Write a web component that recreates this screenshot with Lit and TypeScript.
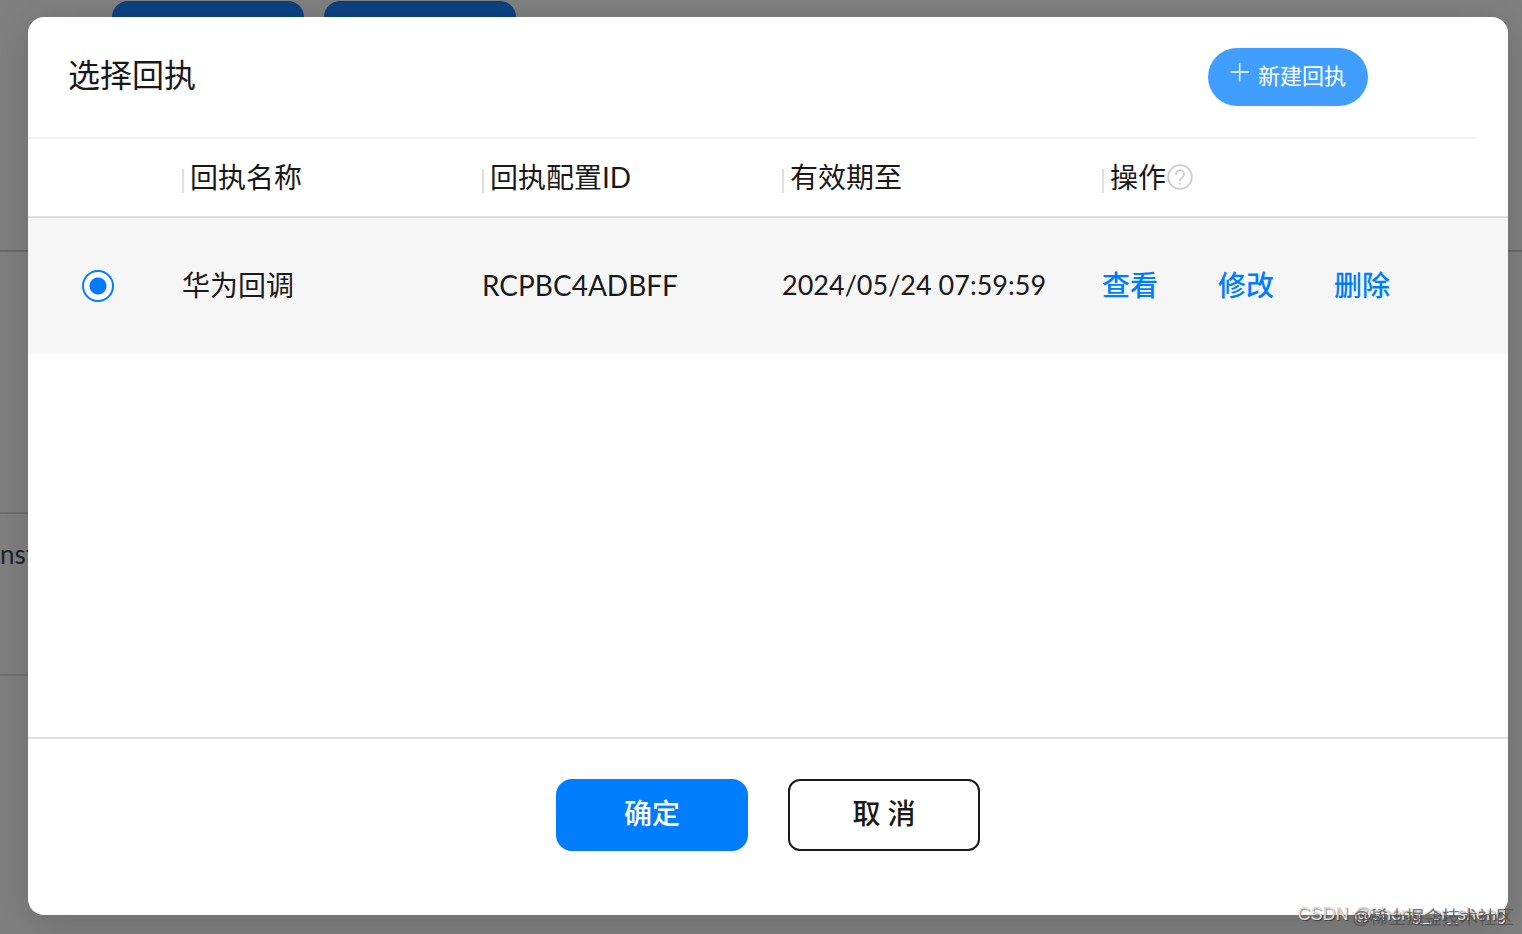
import { LitElement, html, css } from "lit";
import { customElement, state } from "lit/decorators.js";

interface Receipt {
  id: string;
  name: string;
  expires: string;
}

const RECEIPTS: Receipt[] = [
  { id: "RCPBC4ADBFF", name: "华为回调", expires: "2024/05/24 07:59:59" },
];

@customElement("receipt-table")
export class ReceiptTable extends LitElement {
  @state() private selected = "RCPBC4ADBFF";

  static styles = css`
    :host {
      display: block;
      flex: 1;
    }
    table {
      width: 100%;
      border-collapse: separate;
      border-spacing: 0;
      table-layout: fixed;
    }
    .col-pick {
      width: 154px;
    }
    .col-text {
      width: 300px;
    }
    .col-date {
      width: 320px;
    }
    th,
    td {
      padding: 0;
      text-align: left;
      font-weight: 400;
      white-space: nowrap;
      color: #191919;
    }
    th {
      height: 77px;
      border-bottom: 2px solid #dfdfdf;
    }
    .head {
      display: flex;
      align-items: center;
      padding-bottom: 2px;
    }
    .tick {
      width: 2px;
      height: 24px;
      margin: 8px 6px 0 0;
      background: #dfdfdf;
    }
    .head svg {
      display: block;
    }
    .row td {
      box-sizing: border-box;
      height: 136px;
      padding-bottom: 2px;
      background: #f6f6f6;
    }
    .row .pick {
      padding: 0 0 0 54px;
    }
    .row .date {
      font-size: 27px;
    }
    .radio {
      appearance: none;
      display: block;
      box-sizing: border-box;
      width: 32px;
      height: 32px;
      margin: 0;
      border: 2px solid #007dff;
      border-radius: 50%;
      background: #fff;
    }
    .radio:checked {
      background: radial-gradient(circle closest-side, #007dff 8px, #fff 9px);
    }
    .actions {
      display: flex;
      gap: 60px;
    }
    .actions a {
      color: #007dff;
      font-weight: 500;
      text-decoration: none;
    }
  `;

  private heading(text: string, help = false) {
    return html`<div class="head">
      <span class="tick"></span><span>${text}</span>${help
        ? html`<svg width="28" height="28" viewBox="0 0 28 28" fill="none" stroke="#ccc" stroke-width="1.8" role="img" aria-label="帮助">
            <circle cx="14" cy="14" r="11.800"></circle>
            <path d="M10 11.2a4 4 0 1 1 6.300 3.200c-1.500 1-2.300 1.700-2.300 3.400" stroke-linecap="round"></path>
            <circle cx="14" cy="20.800" r="1.100" fill="#ccc" stroke="none"></circle>
          </svg>`
        : null}
    </div>`;
  }

  render() {
    return html`<table>
      <colgroup>
        <col class="col-pick" />
        <col class="col-text" />
        <col class="col-text" />
        <col class="col-date" />
        <col />
      </colgroup>
      <thead>
        <tr>
          <th></th>
          <th>${this.heading("回执名称")}</th>
          <th>${this.heading("回执配置ID")}</th>
          <th>${this.heading("有效期至")}</th>
          <th>${this.heading("操作", true)}</th>
        </tr>
      </thead>
      <tbody>
        ${RECEIPTS.map(
          (r) => html`<tr class="row">
            <td class="pick">
              <input
                class="radio"
                type="radio"
                name="receipt"
                aria-label=${r.name}
                .checked=${this.selected === r.id}
                @change=${() => (this.selected = r.id)}
              />
            </td>
            <td>${r.name}</td>
            <td>${r.id}</td>
            <td class="date">${r.expires}</td>
            <td>
              <div class="actions">
                <a href="#view">查看</a><a href="#edit">修改</a><a href="#delete">删除</a>
              </div>
            </td>
          </tr>`
        )}
      </tbody>
    </table>`;
  }
}

@customElement("app-root")
export class AppRoot extends LitElement {
  static styles = css`
    :host {
      display: grid;
      min-height: 100vh;
      position: relative;
      overflow: hidden;
      background: #808080;
      color: #191919;
      font: 28px/40px Lato, "Noto Sans CJK SC", sans-serif;
    }
    .backdrop,
    .dialog {
      grid-area: 1 / 1;
    }
    .backdrop {
      display: flex;
      flex-direction: column;
    }
    .tabs {
      display: flex;
      gap: 20px;
      height: 249px;
      padding: 1px 112px 0;
      border-bottom: 2px solid #696969;
    }
    .tab {
      width: 192px;
      height: 72px;
      border-radius: 16px;
      background: #0c4182;
    }
    .band {
      width: 50%;
      height: 260px;
      border-bottom: 2px solid #707070;
    }
    .cell {
      box-sizing: border-box;
      width: 50%;
      height: 162px;
      padding-top: 20px;
      border-bottom: 2px solid #707070;
      color: #1c2329;
      font-size: 26px;
    }
    .dialog {
      display: flex;
      flex-direction: column;
      margin: 17px 14px 19px 28px;
      border-radius: 16px;
      background: #fff;
      box-shadow: 0 8px 40px rgba(0, 0, 0, 0.16);
    }
    .top {
      display: flex;
      align-items: center;
      justify-content: space-between;
      height: 120px;
      margin-right: 32px;
      padding: 0 108px 0 40px;
      border-bottom: 2px solid #f2f2f2;
    }
    h1 {
      margin: 0;
      padding-bottom: 4px;
      font-size: 32px;
      font-weight: 400;
    }
    button {
      font-family: inherit;
      cursor: pointer;
    }
    .create {
      display: flex;
      align-items: center;
      gap: 8px;
      height: 58px;
      padding: 0 22px 6px 20px;
      border: 0;
      border-radius: 29px;
      background: #409eff;
      color: #fff;
      font-size: 22px;
    }
    .create svg {
      display: block;
      margin-bottom: 4px;
    }
    .bottom {
      display: flex;
      justify-content: center;
      gap: 40px;
      padding: 40px 0 64px;
      border-top: 2px solid #dfdfdf;
    }
    .btn {
      box-sizing: border-box;
      width: 192px;
      height: 72px;
      padding: 0 0 6px;
      border: 2px solid #191919;
      border-radius: 12px;
      background: #fff;
      color: #191919;
      font-size: 28px;
      font-weight: 500;
    }
    .primary {
      border-color: #007dff;
      border-radius: 16px;
      background: #007dff;
      color: #fff;
    }
    .mark {
      position: absolute;
      right: 16px;
      bottom: 8px;
      color: #ddd;
      font: 18px/24px "Liberation Sans", sans-serif;
      text-shadow: 1px 1px 1px rgba(0, 0, 0, 0.5);
    }
    .site {
      right: 8px;
      bottom: 4px;
      color: rgba(80, 80, 80, 0.8);
      font: 18px/24px "Liberation Sans", "Noto Sans CJK SC", sans-serif;
      text-shadow: none;
    }
  `;

  render() {
    return html`
      <div class="backdrop">
        <div class="tabs"><span class="tab"></span><span class="tab"></span></div>
        <div class="band"></div>
        <div class="cell">nst</div>
      </div>
      <section class="dialog" role="dialog" aria-labelledby="title">
        <header class="top">
          <h1 id="title">选择回执</h1>
          <button class="create" type="button">
            <svg width="22" height="22" viewBox="0 0 22 22" stroke="#fff" stroke-width="1.5" aria-hidden="true">
              <path d="M2.500 11H21M11.700 2V20.500"></path>
            </svg>
            <span>新建回执</span>
          </button>
        </header>
        <receipt-table></receipt-table>
        <footer class="bottom">
          <button class="btn primary" type="button">确定</button>
          <button class="btn" type="button">取 消</button>
        </footer>
      </section>
      <span class="mark">CSDN @sheng_er_sheng</span>
      <span class="mark site">@稀土掘金技术社区</span>
    `;
  }
}
